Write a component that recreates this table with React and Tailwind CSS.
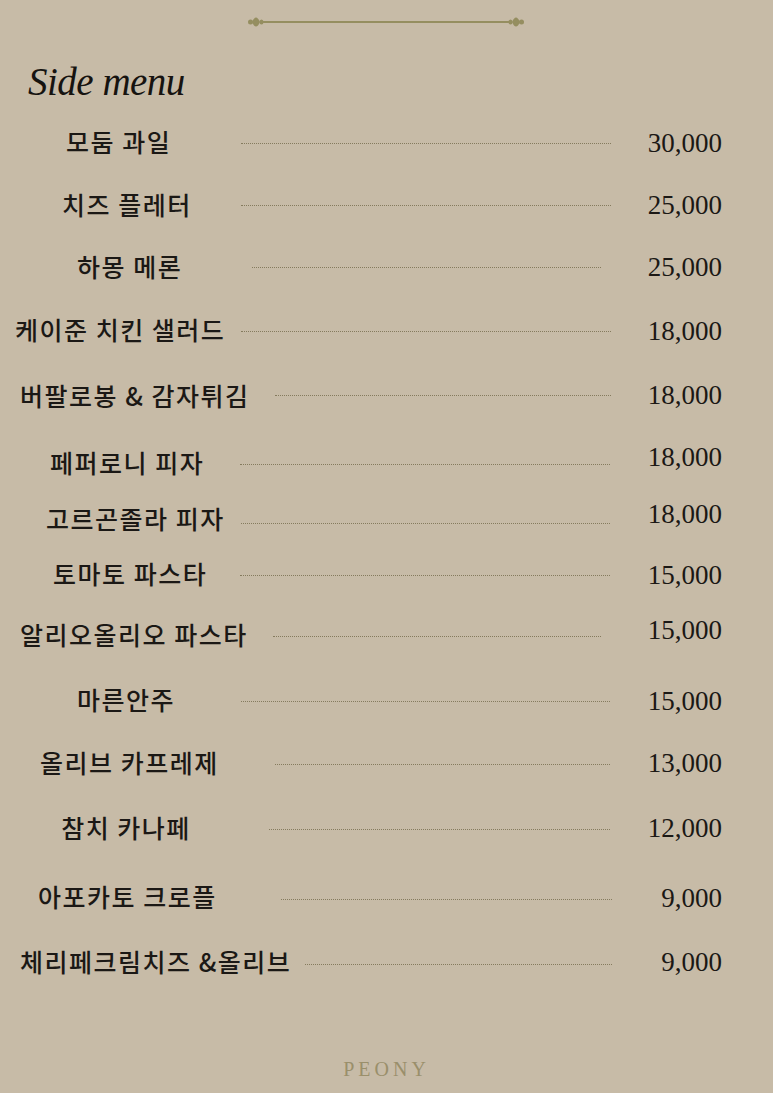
import React from 'react';

const ITEMS = [
  { name: '모둠 과일', price: '30,000', row: 'mt-[20px]', label: 'ml-[66px] w-[102px]', dots: 'ml-[73px] mr-[36px] mt-[4px]', cost: 'mt-[4px]' },
  { name: '치즈 플레터', price: '25,000', row: 'mt-[23px]', label: 'ml-[62px] w-[127px]', dots: 'ml-[52px] mr-[36px] mt-[2px]', cost: 'mt-[2px]' },
  { name: '하몽 메론', price: '25,000', row: 'mt-[22px]', label: 'ml-[77px] w-[104px]', dots: 'ml-[71px] mr-[46px] mt-[2px]', cost: 'mt-[2px]' },
  { name: '케이준 치킨 샐러드', price: '18,000', row: 'mt-[23px]', label: 'ml-[15px] w-[207px]', dots: 'ml-[19px] mr-[36px] mt-[4px]', cost: 'mt-[4px]' },
  { name: '버팔로봉 & 감자튀김', price: '18,000', row: 'mt-[26px]', label: 'ml-[20px] w-[227px]', dots: 'ml-[28px] mr-[36px]', cost: '' },
  { name: '페퍼로니 피자', price: '18,000', row: 'mt-[27px]', label: 'ml-[50px] w-[154px]', dots: 'ml-[36px] mr-[37px] mt-[4px]', cost: 'mb-[10px]' },
  { name: '고르곤졸라 피자', price: '18,000', row: 'mt-[16px]', label: 'ml-[46px] w-[176px]', dots: 'ml-[19px] mr-[37px] mt-[10px]', cost: 'mb-[8px]' },
  { name: '토마토 파스타', price: '15,000', row: 'mt-[15px]', label: 'ml-[53px] w-[152px]', dots: 'ml-[35px] mr-[37px] mt-[4px]', cost: 'mt-[4px]' },
  { name: '알리오올리오 파스타', price: '15,000', row: 'mt-[21px]', label: 'ml-[20px] w-[222px]', dots: 'ml-[31px] mr-[46px] mt-[4px]', cost: 'mb-[8px]' },
  { name: '마른안주', price: '15,000', row: 'mt-[25px]', label: 'ml-[77px] w-[94px]', dots: 'ml-[70px] mr-[37px] mt-[4px]', cost: 'mt-[4px]' },
  { name: '올리브 카프레제', price: '13,000', row: 'mt-[23px]', label: 'ml-[40px] w-[176px]', dots: 'ml-[59px] mr-[37px] mt-[4px]', cost: 'mt-[2px]' },
  { name: '참치 카나페', price: '12,000', row: 'mt-[25px]', label: 'ml-[61px] w-[130px]', dots: 'ml-[78px] mr-[37px] mt-[4px]', cost: 'mt-[2px]' },
  { name: '아포카토 크로플', price: '9,000', row: 'mt-[29px]', label: 'ml-[38px] w-[174px]', dots: 'ml-[69px] mr-[35px] mt-[6px]', cost: 'mt-[4px]' },
  { name: '체리페크림치즈 &올리브', price: '9,000', row: 'mt-[25px]', label: 'ml-[20px] w-[267px]', dots: 'ml-[18px] mr-[35px] mt-[6px]', cost: 'mt-[2px]' },
];

const Ornament = () => (
  <svg width="276" height="12" viewBox="0 0 276 12" className="block">
    <line x1="12" y1="6" x2="264" y2="6" stroke="#958e60" strokeWidth="2" />
    <g fill="#958e60">
      <ellipse cx="2.5" cy="6" rx="2.5" ry="2.5" />
      <path d="M4 6 Q8 -3 12 6 Q8 15 4 6 Z" />
      <ellipse cx="13.5" cy="6" rx="2" ry="2.5" />
      <ellipse cx="273.5" cy="6" rx="2.5" ry="2.5" />
      <path d="M272 6 Q268 -3 264 6 Q268 15 272 6 Z" />
      <ellipse cx="262.5" cy="6" rx="2" ry="2.5" />
    </g>
  </svg>
);

export default function App() {
  return (
    <div className="w-[773px] h-[1093px] bg-[#c7bba7] overflow-hidden pt-[16px]">
      <div className="ml-[248px]">
        <Ornament />
      </div>

      <h1 className="ml-[28px] mt-[34px] h-[39px] text-[39px] leading-none italic tracking-[-0.5px] text-[#161310] font-['Liberation_Serif',serif]">
        Side menu
      </h1>

      <div>
        {ITEMS.map((item) => (
          <div key={item.name} className={`flex items-center h-[40px] pr-[51px] ${item.row}`}>
            <div className={`shrink-0 text-center whitespace-nowrap text-[25px] leading-[40px] tracking-[1.5px] font-medium text-[#1b1815] font-['Noto_Sans_CJK_KR',sans-serif] ${item.label}`}>
              {item.name}
            </div>
            <div className={`flex-1 border-t border-dotted border-[#857b5e] ${item.dots}`} />
            <div className={`shrink-0 w-[75px] text-right text-[27px] leading-none text-[#1b1815] font-['Liberation_Serif',serif] ${item.cost}`}>
              {item.price}
            </div>
          </div>
        ))}
      </div>

      <div className="mt-[78px] text-center text-[20px] leading-none tracking-[4px] text-[#9a8f6b] font-['Liberation_Serif',serif]">
        PEONY
      </div>
    </div>
  );
}
